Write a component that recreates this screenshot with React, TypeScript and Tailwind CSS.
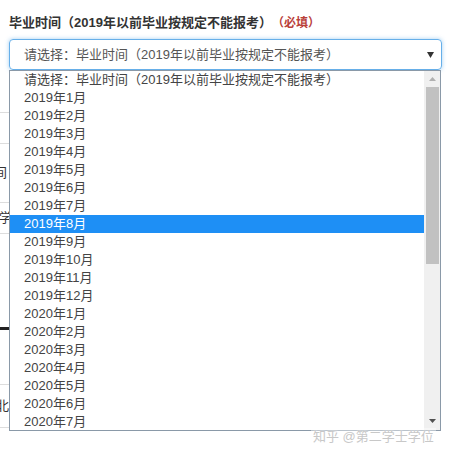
import React from "react";

const months: string[] = [
  "请选择：毕业时间（2019年以前毕业按规定不能报考）",
  ...Array.from({ length: 12 }, (_, i) => `2019年${i + 1}月`),
  ...Array.from({ length: 7 }, (_, i) => `2020年${i + 1}月`),
];

const font = {
  fontFamily: '"Liberation Sans", "Noto Sans CJK SC", sans-serif',
};

export default function App() {
  const selected = 8;

  return (
    <div
      className="relative w-[451px] h-[457px] overflow-hidden bg-white"
      style={font}
    >
      {/* Label + select */}
      <div className="px-[9px] pt-[14px]">
        <div className="flex items-baseline h-[18px] leading-[18px]">
          <span className="text-[13px] font-bold text-[#333]">
            毕业时间（2019年以前毕业按规定不能报考）
          </span>
          <span className="text-[12px] font-bold text-[#b9403a]">（必填）</span>
        </div>
        <div className="mt-[7px] h-[31px] flex items-center justify-between rounded-[4px] border border-[#66afe9] shadow-[0_0_4px_rgba(102,175,233,0.6)] pl-[14px] pr-[7px]">
          <span className="text-[13px] text-[#555]">
            请选择：毕业时间（2019年以前毕业按规定不能报考）
          </span>
          <svg width="7" height="6" viewBox="0 0 7 6">
            <path d="M0 0 H7 L3.5 6 Z" fill="#333" />
          </svg>
        </div>
      </div>

      {/* Page content behind the open list (only its left edge shows) */}
      <div className="w-[24px] overflow-hidden flex flex-col text-[13px] text-[#333]">
        <div className="h-[43px] border-b border-[#ddd]" />
        <div className="h-[31px] border-b border-[#ddd]" />
        <div className="h-[59px] border-b border-[#ddd] flex items-center">
          <span className="-ml-[6px] whitespace-nowrap">间</span>
        </div>
        <div className="h-[31px] border-b border-[#ddd] flex items-center">
          <span className="-ml-[1px] whitespace-nowrap">学</span>
        </div>
        <div className="h-[96px] border-b-[3px] border-[#222]" />
        <div className="h-[55px] border-b border-[#ddd] flex items-start pt-[8px]">
          <span className="-ml-[8px] whitespace-nowrap">，</span>
        </div>
        <div className="h-[43px] border-b border-[#ddd] flex items-center">
          <span className="-ml-[4px] whitespace-nowrap">北</span>
        </div>
      </div>

      {/* Open dropdown list */}
      <div className="absolute left-[9px] top-[70px] w-[432px] h-[361px] border border-[#8a99a8] bg-white flex overflow-hidden">
        <div className="flex-1 flex flex-col">
          {months.map((m, i) => (
            <div
              key={i}
              className={`h-[18px] shrink-0 leading-[18px] pl-[14px] text-[13px] whitespace-nowrap ${
                i === selected ? "bg-[#1e8ff5] text-white" : "text-[#444]"
              }`}
            >
              {m}
            </div>
          ))}
        </div>
        <div className="w-[16px] bg-[#f0f0f0] flex flex-col items-center">
          <div className="h-[16px] flex items-center justify-center">
            <svg width="7" height="4" viewBox="0 0 7 4">
              <path d="M0 4 L3.5 0 L7 4 Z" fill="#b0b0b0" />
            </svg>
          </div>
          <div className="w-[13px] h-[177px] bg-[#c1c1c1]" />
          <div className="flex-1" />
          <div className="h-[18px] flex items-center justify-center">
            <svg width="7" height="4" viewBox="0 0 7 4">
              <path d="M0 0 H7 L3.5 4 Z" fill="#505050" />
            </svg>
          </div>
        </div>
      </div>

      {/* Watermark */}
      <div className="absolute left-[311px] top-[428px] px-[2px] text-[13px] leading-[18px] text-[#c8c8c8] bg-white/40 [text-shadow:0_0_2px_#fff]">
        知乎 @第二学士学位
      </div>
    </div>
  );
}
